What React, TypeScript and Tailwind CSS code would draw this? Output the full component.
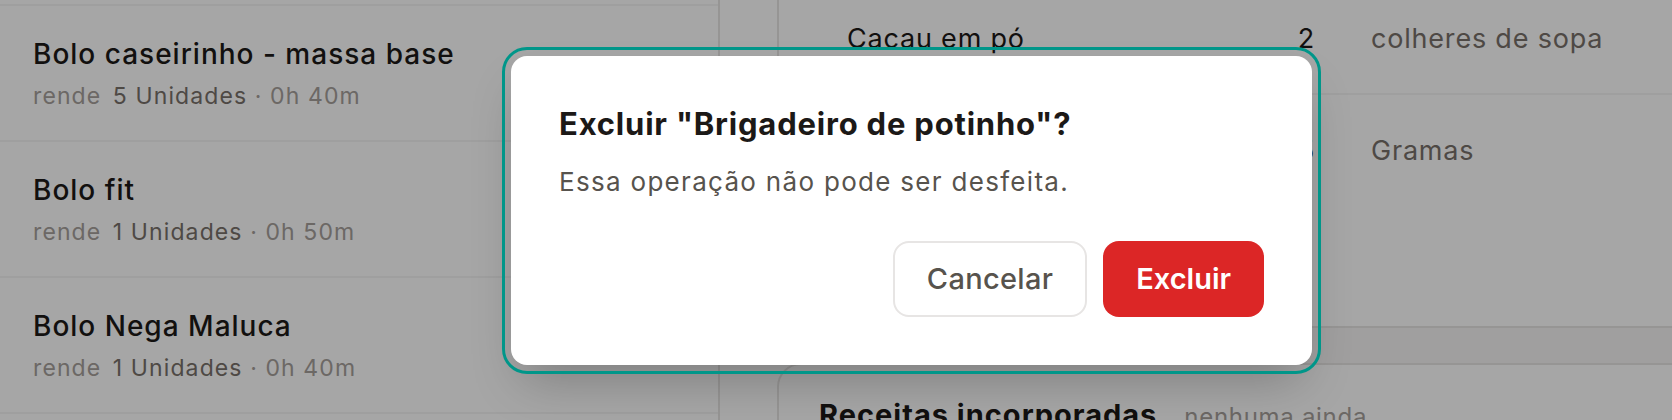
import React from 'react';

const receitas = [
  { nome: 'Brigadeiro de potinho', rende: '30 Unidades', tempo: '0h 30m' },
  { nome: 'Bolo caseirinho - massa base', rende: '5 Unidades', tempo: '0h 40m' },
  { nome: 'Bolo fit', rende: '1 Unidades', tempo: '0h 50m' },
  { nome: 'Bolo Nega Maluca', rende: '1 Unidades', tempo: '0h 40m' },
];

const ingredientes = [
  { nome: 'Cacau em pó', qtd: '2', unidade: 'colheres de sopa' },
  { nome: 'Chocolate meio amargo', qtd: '5', unidade: 'Gramas' },
];

export default function App() {
  return (
    <div className="relative h-[420px] w-[1672px] overflow-hidden bg-white font-['Inter',sans-serif]">
      <div className="flex h-full w-[1740px]">
        {/* Lista de receitas */}
        <div className="w-[720px] shrink-0 border-r-2 border-stone-200 bg-white">
          <div className="-mt-[130px]">
            {receitas.map((r) => (
              <div key={r.nome} className="flex h-[136px] flex-col justify-center border-b-2 border-stone-100 px-[33px]">
                <div className="text-[28px] leading-[36px] font-medium tracking-[1px] text-stone-900">{r.nome}</div>
                <div className="mt-[9px] text-[23px] leading-[30px] tracking-[1.1px] text-stone-400">
                  rende <span className="ml-[4px] text-stone-500">{r.rende}</span> · {r.tempo}
                </div>
              </div>
            ))}
          </div>
        </div>

        {/* Detalhe */}
        <div className="flex flex-1 flex-col pl-[57px]">
          <div className="-mt-[40px] h-[368px] shrink-0 rounded-3xl border-2 border-stone-200 bg-white pt-[20px]">
            {ingredientes.map((i, idx) => (
              <div
                key={i.nome}
                className={`flex h-[113px] text-[27px] tracking-[0.8px] ${
                  idx === 0 ? 'items-center border-b-2 border-stone-100 pt-[4px]' : 'items-center'
                }`}
              >
                <span className="w-[466px] pl-[68px] text-stone-900">{i.nome}</span>
                <span className="w-[70px] text-right text-stone-900">{i.qtd}</span>
                <span className="pl-[56px] text-stone-500">{i.unidade}</span>
              </div>
            ))}
          </div>
          <div className="h-[35px] shrink-0 bg-[#f6f5f4]" />
          <div className="flex-1 rounded-t-3xl border-2 border-stone-200 bg-white px-[40px] pt-[28px]">
            <div className="flex items-baseline gap-[27px]">
              <span className="text-[29px] font-bold tracking-[1px] text-stone-900">Receitas incorporadas</span>
              <span className="text-[24px] tracking-[0.7px] text-stone-400">nenhuma ainda</span>
            </div>
          </div>
        </div>
      </div>

      {/* Diálogo de exclusão */}
      <div className="absolute inset-0 flex items-center bg-black/35 pl-[511px]">
        <div className="flex h-[309px] w-[801px] flex-col rounded-2xl bg-white p-12 shadow-2xl outline-3 outline-offset-6 outline-teal-600">
          <h2 className="text-[31px] leading-[40px] font-bold tracking-[0.8px] text-stone-900">
            Excluir "Brigadeiro de potinho"?
          </h2>
          <p className="mt-[20px] text-[26px] leading-[36px] tracking-[1.3px] text-stone-600">
            Essa operação não pode ser desfeita.
          </p>
          <div className="mt-auto flex justify-end gap-4">
            <button className="h-[76px] rounded-2xl border-2 border-stone-200 bg-white px-[32px] text-[29px] font-medium tracking-[0.3px] text-stone-600">
              Cancelar
            </button>
            <button className="h-[76px] rounded-2xl bg-[#dc2626] px-[33px] text-[29px] font-semibold text-white">
              Excluir
            </button>
          </div>
        </div>
      </div>
    </div>
  );
}
